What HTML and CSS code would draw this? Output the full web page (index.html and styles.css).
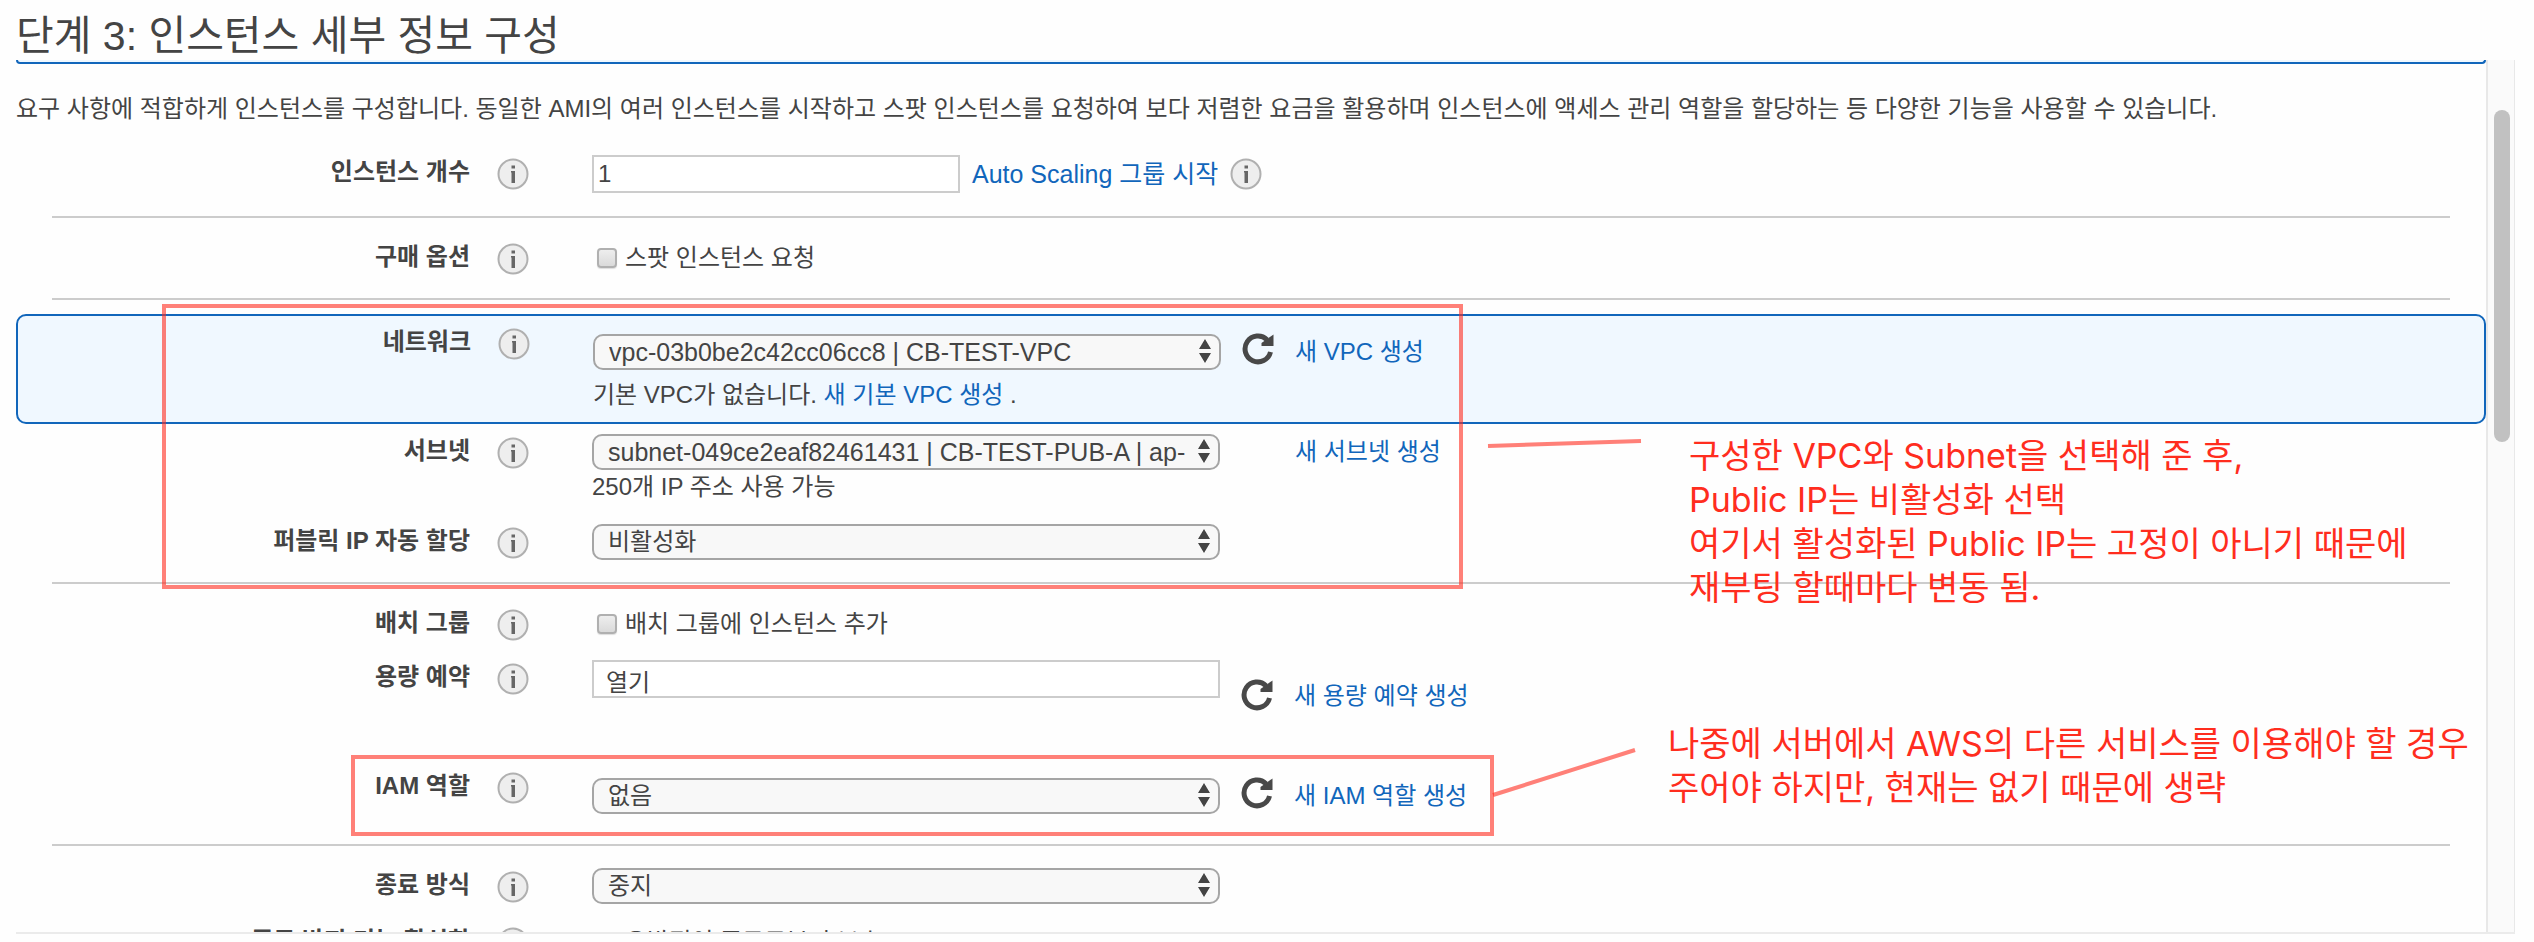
FILE: index.html
```html
<!DOCTYPE html>
<html lang="ko">

<head>
    <meta charset="utf-8">
    <title>단계 3: 인스턴스 세부 정보 구성</title>
    <link rel="stylesheet" href="styles.css">
</head>

<body>
    <svg class="sprite" aria-hidden="true">
        <symbol id="icon-info" viewBox="0 0 32 32">
            <circle cx="16" cy="16" r="14.5" fill="#eeeeee" stroke="#b0b0b0" stroke-width="2" />
            <path d="M14.500 7.500h3.500v3h-3.500zM14 13h4v12h-3.500V14.500H14z" fill="#666666" />
        </symbol>
        <symbol id="icon-refresh" viewBox="0 0 32 32">
            <path d="M28.500 19A12.900 12.900 0 1 1 25 6.700" fill="none" stroke="#484848" stroke-width="5" />
            <path d="M31.500 1.500V13H19.500V10z" fill="#484848" />
        </symbol>
    </svg>

    <h1>단계 3: 인스턴스 세부 정보 구성</h1>

    <div class="pane">
        <form class="content">
            <div class="previous-box"></div>
            <p class="description">요구 사항에 적합하게 인스턴스를 구성합니다. 동일한 AMI의 여러 인스턴스를 시작하고 스팟 인스턴스를 요청하여 보다 저렴한 요금을 활용하며 인스턴스에 액세스 관리 역할을 할당하는 등 다양한 기능을 사용할 수 있습니다.</p>

            <div class="group group-first">
                <div class="row">
                    <label class="name" for="count">인스턴스 개수</label>
                    <button type="button" class="info" aria-label="정보"><svg><use href="#icon-info" /></svg></button>
                    <div class="field">
                        <div class="line line-count">
                            <input type="text" id="count" class="count" value="1">
                            <a href="#" class="wide">Auto Scaling 그룹 시작</a>
                            <button type="button" class="info" aria-label="정보"><svg><use href="#icon-info" /></svg></button>
                        </div>
                    </div>
                </div>
            </div>

            <div class="group">
                <div class="row">
                    <span class="name">구매 옵션</span>
                    <button type="button" class="info" aria-label="정보"><svg><use href="#icon-info" /></svg></button>
                    <div class="field">
                        <label class="check"><input type="checkbox">스팟 인스턴스 요청</label>
                    </div>
                </div>
            </div>

            <div class="group group-network">
                <div class="row row-active">
                    <label class="name" for="network">네트워크</label>
                    <button type="button" class="info" aria-label="정보"><svg><use href="#icon-info" /></svg></button>
                    <div class="field field-low">
                        <div class="line">
                            <select id="network" class="wide">
                                <option>vpc-03b0be2c42cc06cc8 | CB-TEST-VPC</option>
                            </select>
                            <button type="button" class="refresh" aria-label="새로 고침"><svg><use href="#icon-refresh" /></svg></button>
                            <a href="#">새 VPC 생성</a>
                        </div>
                        <div class="note note-network">기본 VPC가 없습니다. <a href="#">새 기본 VPC 생성</a> .</div>
                    </div>
                </div>
                <div class="row row-subnet">
                    <label class="name" for="subnet">서브넷</label>
                    <button type="button" class="info" aria-label="정보"><svg><use href="#icon-info" /></svg></button>
                    <div class="field">
                        <div class="line">
                            <select id="subnet" class="wide">
                                <option>subnet-049ce2eaf82461431 | CB-TEST-PUB-A | ap-</option>
                            </select>
                            <a href="#" class="no-refresh">새 서브넷 생성</a>
                        </div>
                        <div class="note">250개 IP 주소 사용 가능</div>
                    </div>
                </div>
                <div class="row">
                    <label class="name" for="publicIp">퍼블릭 IP 자동 할당</label>
                    <button type="button" class="info" aria-label="정보"><svg><use href="#icon-info" /></svg></button>
                    <div class="field">
                        <select id="publicIp">
                            <option>비활성화</option>
                        </select>
                    </div>
                </div>
            </div>

            <div class="group group-capacity">
                <div class="row">
                    <span class="name">배치 그룹</span>
                    <button type="button" class="info" aria-label="정보"><svg><use href="#icon-info" /></svg></button>
                    <div class="field">
                        <label class="check"><input type="checkbox">배치 그룹에 인스턴스 추가</label>
                    </div>
                </div>
                <div class="row row-capacity">
                    <label class="name" for="capacity">용량 예약</label>
                    <button type="button" class="info" aria-label="정보"><svg><use href="#icon-info" /></svg></button>
                    <div class="field">
                        <div class="line line-capacity">
                            <input type="text" id="capacity" class="capacity" value="열기">
                            <button type="button" class="refresh" aria-label="새로 고침"><svg><use href="#icon-refresh" /></svg></button>
                            <a href="#">새 용량 예약 생성</a>
                        </div>
                    </div>
                </div>
                <div class="row">
                    <label class="name" for="iamRole">IAM 역할</label>
                    <button type="button" class="info" aria-label="정보"><svg><use href="#icon-info" /></svg></button>
                    <div class="field field-low">
                        <div class="line">
                            <select id="iamRole">
                                <option>없음</option>
                            </select>
                            <button type="button" class="refresh" aria-label="새로 고침"><svg><use href="#icon-refresh" /></svg></button>
                            <a href="#">새 IAM 역할 생성</a>
                        </div>
                    </div>
                </div>
            </div>

            <div class="group group-last">
                <div class="row">
                    <label class="name" for="shutdown">종료 방식</label>
                    <button type="button" class="info" aria-label="정보"><svg><use href="#icon-info" /></svg></button>
                    <div class="field">
                        <select id="shutdown">
                            <option>중지</option>
                        </select>
                    </div>
                </div>
                <div class="row">
                    <span class="name">종료 방지 기능 활성화</span>
                    <button type="button" class="info" aria-label="정보"><svg><use href="#icon-info" /></svg></button>
                    <div class="field">
                        <label class="check"><input type="checkbox">우발적인 종료로부터 보호</label>
                    </div>
                </div>
            </div>
        </form>
        <div class="scrollbar">
            <div class="thumb"></div>
        </div>
    </div>

    <!-- 설명 표시 -->
    <div class="mark mark-network"></div>
    <div class="mark mark-iam"></div>
    <svg class="pointers" aria-hidden="true">
        <path d="M1488 446L1641 441M1493 795L1635 750" />
    </svg>
    <div class="comment comment-network">구성한 VPC와 Subnet을 선택해 준 후,<br>Public IP는 비활성화 선택<br>여기서 활성화된 Public IP는 고정이 아니기 때문에<br>재부팅 할때마다 변동 됨.</div>
    <div class="comment comment-iam">나중에 서버에서 AWS의 다른 서비스를 이용해야 할 경우<br>주어야 하지만, 현재는 없기 때문에 생략</div>
</body>

</html>
```
FILE: styles.css
```css
* {
    box-sizing: border-box;
}

body {
    position: relative;
    display: flex;
    flex-direction: column;
    height: 100vh;
    margin: 0;
    padding: 0 19px 8px 16px;
    overflow: hidden;
    background-color: #fefefe;
    color: #444;
    font-family: "Liberation Sans", "Noto Sans CJK KR", sans-serif;
    font-size: 24px;
    line-height: 30px;
}

h1 {
    flex: none;
    margin: 0;
    padding-top: 12px;
    font-size: 41px;
    font-weight: normal;
    line-height: 48px;
}

a {
    color: #1166bb;
    text-decoration: none;
    white-space: nowrap;
}

input,
select,
button {
    margin: 0;
    color: inherit;
    font: inherit;
}

.sprite {
    position: absolute;
    width: 0;
    height: 0;
}

.pane {
    display: flex;
    flex: 1;
    min-height: 0;
    overflow: hidden;
    border-bottom: 2px solid #ebebeb;
}

.content {
    flex: 1;
    min-width: 0;
}

.previous-box {
    height: 4px;
    border: 2px solid #1166bb;
    border-top: none;
    border-radius: 0 0 8px 8px;
    background-color: #f0f8ff;
}

.description {
    margin: 30px 0 0;
    white-space: nowrap;
}

/* 설정 그룹 */
.group {
    display: flex;
    flex-direction: column;
    gap: 20px;
    margin: 0 36px;
    padding: 22px 0;
    border-bottom: 2px solid #ccc;
}

.group-first {
    padding: 31px 0 23px;
}

.group-network {
    gap: 0;
    padding-top: 14px;
}

.group-capacity {
    gap: 18px;
    padding-bottom: 30px;
}

.group-last {
    border-bottom: none;
}

.row {
    display: grid;
    grid-template-columns: 418px 59px 1fr;
    align-items: start;
}

.row-active {
    margin: 0 -36px;
    padding: 9px 34px 12px 35px;
    border: 2px solid #1166bb;
    border-radius: 10px;
    background-color: #f0f8ff;
}

.row-subnet {
    margin: 10px 0 22px;
}

.row-capacity {
    margin-bottom: 40px;
}

.name {
    padding-top: 2px;
    font-weight: bold;
    text-align: right;
}

.info,
.refresh {
    flex: none;
    width: 32px;
    height: 32px;
    padding: 0;
    border: none;
    background: none;
    cursor: pointer;
}

.info svg,
.refresh svg {
    display: block;
    width: 32px;
    height: 32px;
}

.row > .info {
    justify-self: end;
    margin-top: 3px;
}

.field {
    padding-left: 63px;
}

.field-low {
    padding-top: 9px;
}

.line {
    display: flex;
    align-items: center;
    gap: 21px;
}

.line-count {
    gap: 12px;
}

.line-capacity {
    align-items: flex-end;
}

.refresh {
    margin: -4px 0 2px;
}

.line-capacity .refresh {
    margin: 19px 0 0;
}

.no-refresh {
    margin-left: 54px;
}

.wide {
    font-size: 25px;
}

.note {
    padding-top: 2px;
}

.note-network {
    margin-top: 10px;
    padding-top: 0;
}

/* 입력 요소 */
.count,
.capacity {
    height: 38px;
    border: 2px solid #ccc;
    background-color: #fff;
}

.count {
    width: 368px;
    padding: 0 4px;
}

.capacity {
    align-self: flex-start;
    width: 628px;
    padding: 2px 12px 0;
}

select {
    display: block;
    width: 628px;
    height: 36px;
    padding: 0 26px 0 14px;
    border: 2px solid #a5a5a5;
    border-radius: 10px;
    appearance: none;
    background: #f8f8f8 url("data:image/svg+xml,%3Csvg xmlns='http://www.w3.org/2000/svg' width='12' height='24'%3E%3Cpath d='M0 10L6 0l6 10zM0 14h12L6 24z' fill='%23444'/%3E%3C/svg%3E") no-repeat right 8px top 3px;
}

.check {
    display: flex;
    align-items: center;
    gap: 8px;
    height: 36px;
    padding-left: 5px;
}

.check input {
    width: 20px;
    height: 20px;
    border: 2px solid #b0b0b0;
    border-radius: 4px;
    appearance: none;
    background: linear-gradient(#eee, #dadada);
    box-shadow: 0 1px 1px #ddd;
}

.scrollbar {
    flex: none;
    width: 29px;
    padding: 50px 4px 0 6px;
    border: solid #e8e8e8;
    border-width: 0 1px 0 2px;
    background-color: #fafafa;
}

.thumb {
    height: 332px;
    border-radius: 8px;
    background-color: #c1c1c1;
}

/* 설명 표시 */
.mark {
    position: absolute;
    border: 4px solid rgba(255, 43, 30, 0.6);
}

.mark-network {
    top: 304px;
    left: 162px;
    width: 1301px;
    height: 285px;
}

.mark-iam {
    top: 755px;
    left: 351px;
    width: 1143px;
    height: 81px;
}

.pointers {
    position: absolute;
    top: 0;
    left: 0;
    width: 100%;
    height: 100%;
    pointer-events: none;
}

.pointers path {
    fill: none;
    stroke: rgba(255, 43, 30, 0.6);
    stroke-width: 4;
}

.comment {
    position: absolute;
    color: #ff2d1e;
    font-family: Inter, "Noto Sans CJK KR", sans-serif;
    font-size: 34px;
    line-height: 44px;
    white-space: nowrap;
}

.comment-network {
    top: 434px;
    left: 1689px;
}

.comment-iam {
    top: 722px;
    left: 1668px;
}
```
